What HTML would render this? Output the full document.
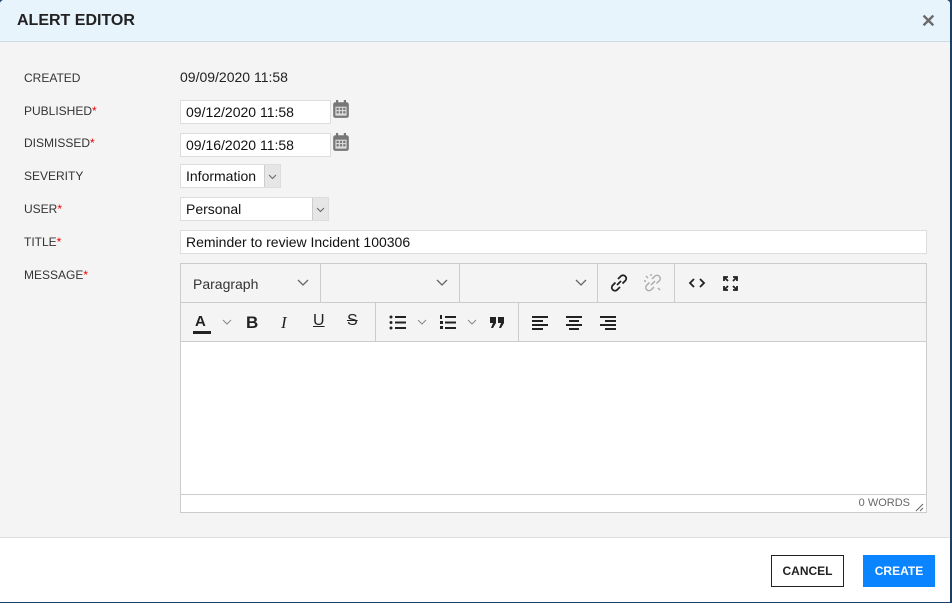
<!DOCTYPE html>
<html><head><style>
*{box-sizing:border-box;margin:0;padding:0}
body{width:952px;height:603px;background:#1c3f66;font-family:"Liberation Sans",sans-serif;position:relative;overflow:hidden}
.dlg{position:absolute;left:0;top:0;width:950px;height:602px;background:#f4f4f4;border-radius:4px 4px 0 0;overflow:hidden}
.hdr{position:absolute;left:0;top:0;right:0;height:42px;background:#e8f4fc;border-bottom:1px solid #cfdbe3}
.hdr h1{position:absolute;left:17px;top:12px;font-size:16px;font-weight:bold;color:#222}
.x{position:absolute;right:14px;top:11px;font-size:18px;font-weight:bold;color:#6b6b6b}
.lbl{position:absolute;left:24px;font-size:12px;color:#333}
.lbl b{color:#e00;font-weight:normal}
.in{position:absolute;background:#fff;border:1px solid #ddd;font-size:14px;color:#111;padding:0 0 0 5px;line-height:22px;height:24px}
.sel .dd{position:absolute;right:0;top:0;width:16px;height:22px;background:#e6e6e6;border-left:1px solid #ccc}
.cal{position:absolute;left:332px;width:18px;height:19px}
.ed{position:absolute;left:180px;top:263px;width:747px;height:250px;border:1px solid #ccc;background:#fff}
.tb{position:absolute;left:0;width:100%;height:39px;background:#f4f4f4;border-bottom:1px solid #ccc}
.sep{position:absolute;top:0;width:1px;height:39px;background:#ccc}
.ic{position:absolute;font-size:14px;color:#222}
.foot{position:absolute;left:0;top:537px;right:0;bottom:0;background:#fff;border-top:1px solid #ddd}
.btn{position:absolute;top:17px;height:32px;font-size:12px;font-weight:bold;line-height:30px;text-align:center}
</style></head><body>
<div class="dlg">
<div class="hdr"><h1>ALERT EDITOR</h1><div class="x">✕</div></div>
<div class="lbl" style="top:71px">CREATED</div>
<div style="position:absolute;left:180px;top:69px;font-size:14px;color:#222">09/09/2020 11:58</div>
<div class="lbl" style="top:104px">PUBLISHED<b>*</b></div>
<div class="in" style="left:180px;top:100px;width:151px">09/12/2020 11:58</div>
<svg class="cal" style="top:100px" viewBox="0 0 16 17"><rect x="1" y="2" width="14" height="14" rx="2" fill="#777"/><rect x="3" y="6" width="10" height="8" fill="#ddd"/><rect x="3.5" y="0" width="2" height="4" fill="#777"/><rect x="10.5" y="0" width="2" height="4" fill="#777"/><g fill="#777"><rect x="4" y="7" width="2" height="2"/><rect x="7" y="7" width="2" height="2"/><rect x="10" y="7" width="2" height="2"/><rect x="4" y="10" width="2" height="2"/><rect x="7" y="10" width="2" height="2"/><rect x="10" y="10" width="2" height="2"/></g></svg>
<div class="lbl" style="top:136px">DISMISSED<b>*</b></div>
<div class="in" style="left:180px;top:133px;width:151px">09/16/2020 11:58</div>
<svg class="cal" style="top:133px" viewBox="0 0 16 17"><rect x="1" y="2" width="14" height="14" rx="2" fill="#777"/><rect x="3" y="6" width="10" height="8" fill="#ddd"/><rect x="3.5" y="0" width="2" height="4" fill="#777"/><rect x="10.5" y="0" width="2" height="4" fill="#777"/><g fill="#777"><rect x="4" y="7" width="2" height="2"/><rect x="7" y="7" width="2" height="2"/><rect x="10" y="7" width="2" height="2"/><rect x="4" y="10" width="2" height="2"/><rect x="7" y="10" width="2" height="2"/><rect x="10" y="10" width="2" height="2"/></g></svg>
<div class="lbl" style="top:169px">SEVERITY</div>
<div class="in sel" style="left:180px;top:164px;width:101px">Information<div class="dd"><svg width="15" height="22"><path d="M4 10l3.5 3.5L11 10" stroke="#666" fill="none"/></svg></div></div>
<div class="lbl" style="top:202px">USER<b>*</b></div>
<div class="in sel" style="left:180px;top:197px;width:149px">Personal<div class="dd"><svg width="15" height="22"><path d="M4 10l3.5 3.5L11 10" stroke="#666" fill="none"/></svg></div></div>
<div class="lbl" style="top:235px">TITLE<b>*</b></div>
<div class="in" style="left:180px;top:230px;width:747px">Reminder to review Incident 100306</div>
<div class="lbl" style="top:268px">MESSAGE<b>*</b></div>
<div class="ed">
 <div class="tb" style="top:0">
  <div class="ic" style="left:12px;top:12px;font-size:14px;color:#333">Paragraph</div>
  <svg class="ic" style="left:116px;top:15px" width="12" height="8"><path d="M1 1l5 5 5-5" stroke="#666" fill="none" stroke-width="1.3"/></svg>
  <div class="sep" style="left:139px"></div>
  <svg class="ic" style="left:255px;top:15px" width="12" height="8"><path d="M1 1l5 5 5-5" stroke="#666" fill="none" stroke-width="1.3"/></svg>
  <div class="sep" style="left:278px"></div>
  <svg class="ic" style="left:394px;top:15px" width="12" height="8"><path d="M1 1l5 5 5-5" stroke="#666" fill="none" stroke-width="1.3"/></svg>
  <div class="sep" style="left:416px"></div>
  <svg class="ic" style="left:428px;top:9px" width="20" height="20"><path d="M9 6l3-3a3.2 3.2 0 014.5 4.5l-3 3M11 14l-3 3a3.2 3.2 0 01-4.5-4.5l3-3M8 12l4-4" stroke="#222" fill="none" stroke-width="1.8"/></svg>
  <svg class="ic" style="left:462px;top:9px" width="20" height="20"><path d="M9 6l3-3a3.2 3.2 0 014.5 4.5l-3 3M11 14l-3 3a3.2 3.2 0 01-4.5-4.5l3-3M8 12l4-4M3 3l2 2M17 17l-2-2M8 1v2M1 8h2" stroke="#aaa" fill="none" stroke-width="1.4"/></svg>
  <div class="sep" style="left:493px"></div>
  <svg class="ic" style="left:507px;top:13px" width="18" height="12"><path d="M6 2L2 6l4 4M12 2l4 4-4 4" stroke="#222" fill="none" stroke-width="1.8"/></svg>
  <svg class="ic" style="left:541px;top:11px" width="17" height="17"><path d="M2 6V2h4M2 2l4 4M15 6V2h-4M15 2l-4 4M2 11v4h4M2 15l4-4M15 11v4h-4M15 15l-4-4" stroke="#222" fill="none" stroke-width="1.8"/></svg>
 </div>
 <div class="tb" style="top:39px">
  <div class="ic" style="left:14px;top:10px;font-size:15px;font-weight:bold">A</div>
  <div style="position:absolute;left:12px;top:28px;width:18px;height:3px;background:#222"></div>
  <svg class="ic" style="left:41px;top:16px" width="10" height="7"><path d="M1 1l4 4 4-4" stroke="#888" fill="none"/></svg>
  <div class="ic" style="left:65px;top:10px;font-size:17px;font-weight:bold">B</div>
  <div class="ic" style="left:100px;top:10px;font-size:17px;font-style:italic;font-family:'Liberation Serif',serif">I</div>
  <div class="ic" style="left:132px;top:9px;font-size:16px;text-decoration:underline">U</div>
  <div class="ic" style="left:166px;top:9px;font-size:16px;text-decoration:line-through">S</div>
  <div class="sep" style="left:194px"></div>
  <svg class="ic" style="left:208px;top:12px" width="18" height="15"><g fill="#222"><circle cx="2" cy="2" r="1.5"/><circle cx="2" cy="7.5" r="1.5"/><circle cx="2" cy="13" r="1.5"/><rect x="6" y="1" width="11" height="2"/><rect x="6" y="6.5" width="11" height="2"/><rect x="6" y="12" width="11" height="2"/></g></svg>
  <svg class="ic" style="left:236px;top:16px" width="10" height="7"><path d="M1 1l4 4 4-4" stroke="#888" fill="none"/></svg>
  <svg class="ic" style="left:258px;top:12px" width="18" height="15"><g fill="#222"><rect x="6" y="1" width="11" height="2"/><rect x="6" y="6.5" width="11" height="2"/><rect x="6" y="12" width="11" height="2"/><rect x="1" y="0" width="2" height="4"/><rect x="1" y="6" width="3" height="3"/><rect x="1" y="11" width="3" height="3"/></g></svg>
  <svg class="ic" style="left:286px;top:16px" width="10" height="7"><path d="M1 1l4 4 4-4" stroke="#888" fill="none"/></svg>
  <svg class="ic" style="left:309px;top:14px" width="14" height="11"><g fill="#222"><path d="M0 0h6v6l-3 5H1l2-5H0z"/><path d="M8 0h6v6l-3 5H9l2-5H8z"/></g></svg>
  <div class="sep" style="left:337px"></div>
  <svg class="ic" style="left:351px;top:12px" width="17" height="15"><g fill="#222"><rect x="0" y="1" width="16" height="2"/><rect x="0" y="5" width="11" height="2"/><rect x="0" y="9" width="16" height="2"/><rect x="0" y="13" width="11" height="2"/></g></svg>
  <svg class="ic" style="left:385px;top:12px" width="17" height="15"><g fill="#222"><rect x="0" y="1" width="16" height="2"/><rect x="3" y="5" width="10" height="2"/><rect x="0" y="9" width="16" height="2"/><rect x="3" y="13" width="10" height="2"/></g></svg>
  <svg class="ic" style="left:419px;top:12px" width="17" height="15"><g fill="#222"><rect x="0" y="1" width="16" height="2"/><rect x="5" y="5" width="11" height="2"/><rect x="0" y="9" width="16" height="2"/><rect x="5" y="13" width="11" height="2"/></g></svg>
 </div>
 <div style="position:absolute;left:0;right:0;top:230px;height:1px;background:#ccc"></div>
 <div style="position:absolute;right:16px;top:233px;font-size:11px;color:#666">0 WORDS</div>
 <svg style="position:absolute;right:2px;top:238px" width="10" height="10"><path d="M9 2L2 9M9 6L6 9" stroke="#666"/></svg>
</div>
<div class="foot">
 <div class="btn" style="left:771px;width:73px;border:1px solid #222;color:#222;background:#fff">CANCEL</div>
 <div class="btn" style="left:863px;width:72px;background:#0a84ff;color:#fff;line-height:32px">CREATE</div>
</div>
</div>
</body></html>
